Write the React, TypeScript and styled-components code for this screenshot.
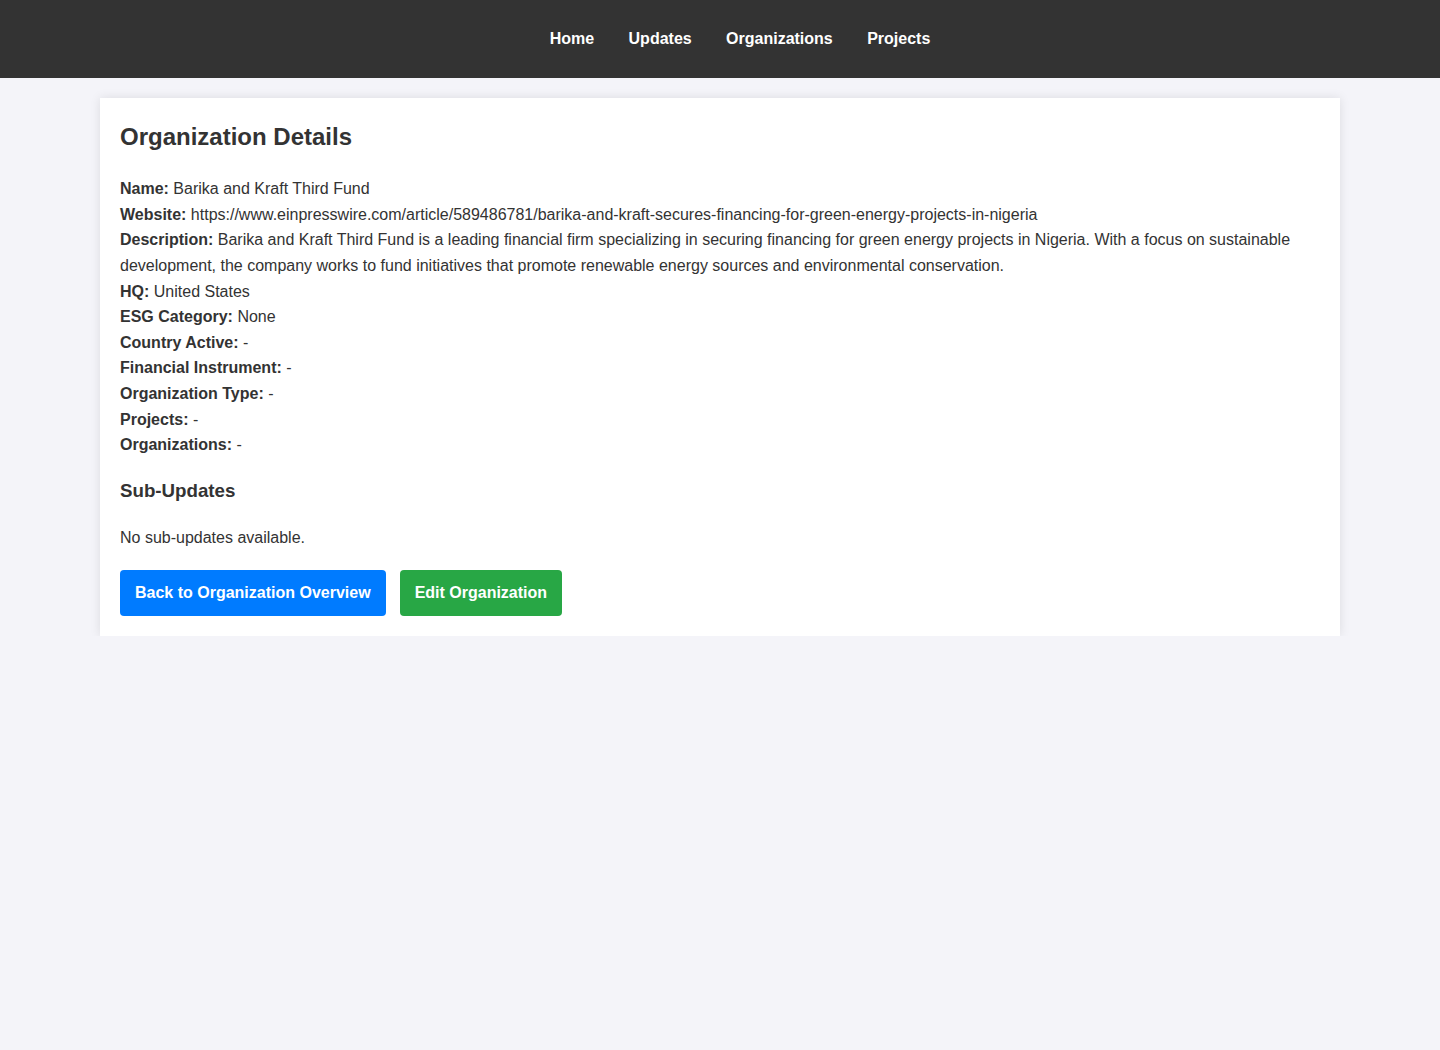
import React from "react";
import styled, { createGlobalStyle } from "styled-components";

const GlobalStyle = createGlobalStyle`
  html, body { margin: 0; padding: 0; }
  body {
    background: #f4f4f9;
    font-family: "Liberation Sans", Arial, sans-serif;
    color: #333;
    line-height: 1.6;
  }
`;

const Header = styled.header`
  background: #333;
  height: 78px;
  display: flex;
  align-items: center;
  justify-content: center;
`;

const NavList = styled.ul`
  list-style: none;
  margin: 0;
  padding: 0 0 0 40px;
  display: flex;
  gap: 34.4px;
`;

const NavLink = styled.a`
  color: #fff;
  font-weight: bold;
  font-size: 16px;
  text-decoration: none;
`;

const Card = styled.main`
  max-width: 1200px;
  margin: 20px auto 0;
  padding: 20px;
  background: #fff;
  box-shadow: 0 0 10px rgba(0, 0, 0, 0.1);
`;

const Title = styled.h1`
  font-size: 24px;
  margin: 0 0 19.8px;
  line-height: 1.6;
`;

const Field = styled.div`
  font-size: 16px;
  line-height: 25.6px;
`;

const Label = styled.strong`
  font-weight: bold;
`;

const SubTitle = styled.h3`
  font-size: 18.72px;
  margin: 18.4px 0 18.72px;
  line-height: 1.6;
`;

const Empty = styled.p`
  font-size: 16px;
  margin: 0 0 19.5px;
`;

const Actions = styled.div`
  display: flex;
  gap: 14px;
`;

const Button = styled.a<{ $tone: "primary" | "success" }>`
  display: inline-block;
  padding: 10px 15px;
  font-size: 16px;
  font-weight: bold;
  line-height: 26px;
  color: #fff;
  text-decoration: none;
  border-radius: 4px;
  background: ${(p) => (p.$tone === "primary" ? "#007bff" : "#28a745")};
`;

const fields: [string, string][] = [
  ["Name:", "Barika and Kraft Third Fund"],
  ["Website:", "https://www.einpresswire.com/article/589486781/barika-and-kraft-secures-financing-for-green-energy-projects-in-nigeria"],
  ["Description:", "Barika and Kraft Third Fund is a leading financial firm specializing in securing financing for green energy projects in Nigeria. With a focus on sustainable development, the company works to fund initiatives that promote renewable energy sources and environmental conservation."],
  ["HQ:", "United States"],
  ["ESG Category:", "None"],
  ["Country Active:", "-"],
  ["Financial Instrument:", "-"],
  ["Organization Type:", "-"],
  ["Projects:", "-"],
  ["Organizations:", "-"],
];

export default function App() {
  return (
    <>
      <GlobalStyle />
      <Header>
        <nav>
          <NavList>
            {["Home", "Updates", "Organizations", "Projects"].map((l) => (
              <li key={l}>
                <NavLink href="#">{l}</NavLink>
              </li>
            ))}
          </NavList>
        </nav>
      </Header>
      <Card>
        <Title>Organization Details</Title>
        {fields.map(([k, v]) => (
          <Field key={k}>
            <Label>{k}</Label> {v}
          </Field>
        ))}
        <SubTitle>Sub-Updates</SubTitle>
        <Empty>No sub-updates available.</Empty>
        <Actions>
          <Button $tone="primary" href="#">Back to Organization Overview</Button>
          <Button $tone="success" href="#">Edit Organization</Button>
        </Actions>
      </Card>
    </>
  );
}
